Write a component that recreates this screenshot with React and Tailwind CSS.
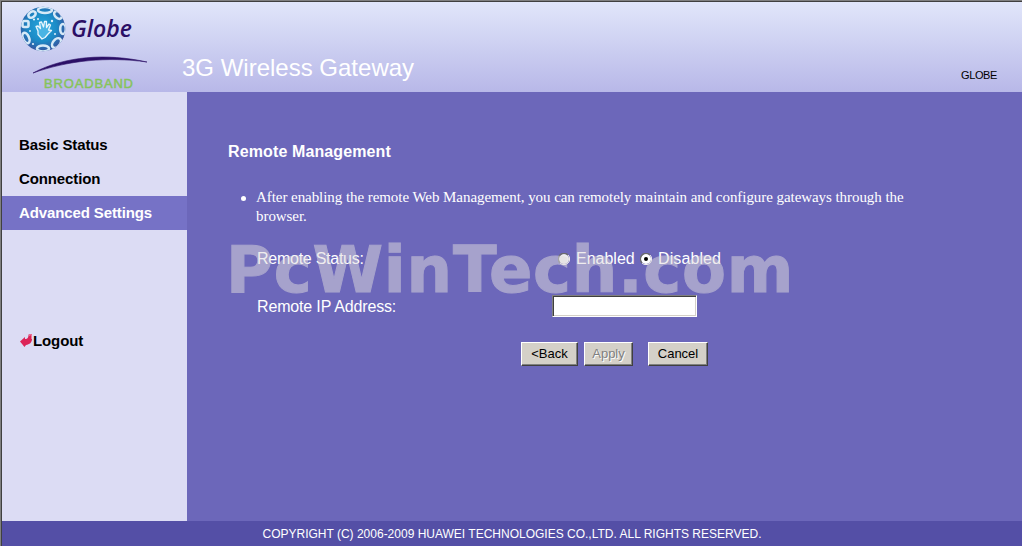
const menuItems = [
  { label: 'Basic Status', active: false },
  { label: 'Connection', active: false },
  { label: 'Advanced Settings', active: true },
]

function GlobeLogo() {
  return (
    <svg width="160" height="90" viewBox="0 0 160 90" className="block">
      <defs>
        <radialGradient id="ball" cx="0.48" cy="0.45" r="0.55">
          <stop offset="0" stopColor="#27a6dc" />
          <stop offset="0.6" stopColor="#1c8ac6" />
          <stop offset="1" stopColor="#35559f" />
        </radialGradient>
        <clipPath id="ballClip">
          <circle cx="41" cy="27" r="22.3" />
        </clipPath>
      </defs>
      <circle cx="41" cy="27" r="22.3" fill="url(#ball)" />
      {/* people holding hands around the ball */}
      <g clipPath="url(#ballClip)" fill="none" stroke="#d6e9f7" strokeWidth="2.6">
        <ellipse cx="43" cy="8" rx="7" ry="3" />
        <ellipse cx="30" cy="12.5" rx="4" ry="2.8" transform="rotate(-35 30 12.5)" />
        <ellipse cx="56" cy="13" rx="4.5" ry="3" transform="rotate(45 56 13)" />
        <rect x="20.5" y="19" width="6" height="6" rx="1.5" />
        <ellipse cx="61" cy="27" rx="2.8" ry="5" />
        <ellipse cx="24" cy="36" rx="3" ry="5.5" transform="rotate(-25 24 36)" />
        <ellipse cx="54.5" cy="41" rx="3.5" ry="5.5" transform="rotate(40 54.5 41)" />
        <ellipse cx="41" cy="46.5" rx="6" ry="3" />
      </g>
      <g fill="#e3f1fb">
        <circle cx="32" cy="17.5" r="1.1" />
        <circle cx="36" cy="17" r="1" />
        <circle cx="50" cy="19" r="1.2" />
        <circle cx="31" cy="42" r="1.1" />
        <circle cx="28" cy="29" r="0.9" />
        <circle cx="53" cy="32" r="1" />
      </g>
      <path
        d="M40 37L36 32.5V29L34 24.5L36 24L38.5 26.5L37.5 20.5L39.5 20L41.5 25L42.5 19.5H44.5V25.5L47 22L48.5 23L46.5 28L49.5 28.5L46 32L43 35.5Z"
        fill="#49b4e4"
        stroke="#eaf6fd"
        strokeWidth="1.3"
        strokeLinejoin="round"
      />
      <text
        x="69"
        y="35"
        textLength="61"
        lengthAdjust="spacingAndGlyphs"
        fill="#2b0f66"
        className="font-['Open_Sans',sans-serif] text-[23px] font-semibold italic"
      >
        Globe
      </text>
      <path d="M31 71C63 54 104 51 145 60C105 54.5 66 58.5 31 71Z" fill="#2b0f66" stroke="#2b0f66" strokeWidth="0.6" />
      <text
        x="42"
        y="85.5"
        textLength="89"
        fill="#86c35c"
        stroke="#86c35c"
        strokeWidth="0.5"
        className="font-['Liberation_Sans',Arial,sans-serif] text-[13px]"
      >
        BROADBAND
      </text>
    </svg>
  )
}

function LogoutIcon() {
  return (
    <svg width="13" height="14" viewBox="0 0 13 14" className="block shrink-0">
      <path d="M0 7.5L5 3V5C8 5 8.5 3 8.5 0.5L12 0V5C12 8.5 9.5 10.5 6 11L4.5 13Z" fill="#dc2458" />
      <path d="M9 1.5L11.5 0.5V5" fill="none" stroke="#ee7f9d" />
    </svg>
  )
}

function Radio({ checked }) {
  return (
    <svg width="12" height="12" viewBox="0 0 12 12" className="block shrink-0">
      <circle cx="6" cy="6" r="5" fill={checked ? '#fff' : '#ececec'} />
      <path d="M2 10A5.5 5.5 0 0 1 10 2" fill="none" stroke="#6b6b6b" strokeWidth="1.3" />
      <path d="M10 2A5.5 5.5 0 0 1 2 10" fill="none" stroke="#f4f2ec" strokeWidth="1" />
      {checked && <circle cx="6" cy="6" r="2" fill="#000" />}
    </svg>
  )
}

function WinButton({ children, className, disabled }) {
  return (
    <button
      disabled={disabled}
      className={`h-6 border border-t-white border-l-white border-r-[#404040] border-b-[#404040] bg-[#d4d0c8] text-center text-[13px] leading-[22px] shadow-[inset_-1px_-1px_0_#808080] ${
        disabled ? 'text-[#808080] [text-shadow:1px_1px_0_#fff]' : 'text-black'
      } ${className}`}
    >
      {children}
    </button>
  )
}

function App() {
  return (
    <div className="flex h-[546px] w-[1022px] flex-col overflow-hidden border-t border-l border-[#808080] font-['Liberation_Sans',Arial,sans-serif]">
      <div className="flex min-h-0 flex-1 flex-col border-t border-l border-[#404040]">
        <header className="flex h-[90px] shrink-0 bg-linear-to-b from-[#e1e6fa] to-[#b8b8e8]">
          <div className="w-[180px]">
            <GlobeLogo />
          </div>
          <h1 className="pt-[52px] text-[24px] leading-[28px] whitespace-nowrap text-white">3G Wireless Gateway</h1>
          <div className="ml-auto pt-[67px] pr-[25px] text-[11px] leading-[13px] tracking-[-0.4px] text-black">GLOBE</div>
        </header>

        <div className="flex min-h-0 flex-1">
          <aside className="w-[185px] shrink-0 bg-[#dcdcf4] pt-9 text-[15px] font-bold tracking-[-0.12px]">
            {menuItems.map((item) => (
              <div
                key={item.label}
                className={`h-[34px] pl-[17px] leading-[34px] whitespace-nowrap ${
                  item.active ? 'bg-[#7672c6] text-white' : 'text-black'
                }`}
              >
                {item.label}
              </div>
            ))}
            <div className="mt-[94px] flex h-[34px] items-center pl-[18px]">
              <LogoutIcon />
              <span>Logout</span>
            </div>
          </aside>

          <main className="relative flex-1 bg-[#6c67ba] text-white">
            <h2 className="pt-[51px] pl-[41px] text-[16px] leading-[18px] font-bold tracking-[0.12px]">Remote Management</h2>
            <div className="mt-[27px] flex pl-[54px] font-['Liberation_Serif','Times_New_Roman',serif] text-[15px] leading-[19px]">
              <span className="mt-[8px] mr-[10px] size-[5px] rounded-full bg-white" />
              <p className="tracking-[-0.06px] whitespace-nowrap">
                After enabling the remote Web Management, you can remotely maintain and configure gateways through the
                <br />
                browser.
              </p>
            </div>

            <div className="mt-[23px] flex h-[20px] items-center pl-[70px] text-[16px]">
              <span className="w-[301px] shrink-0 tracking-[-0.26px]">Remote Status:</span>
              <Radio />
              <span className="w-[70px] shrink-0 pl-[6px]">Enabled</span>
              <Radio checked />
              <span className="pl-[6px] tracking-[0.1px]">Disabled</span>
            </div>
            <div className="mt-[25px] flex h-[24px] items-center pl-[70px] text-[16px]">
              <span className="w-[295px] shrink-0 pt-[1px] tracking-[-0.16px]">Remote IP Address:</span>
              <input
                type="text"
                className="relative z-10 h-[22px] w-[145px] border border-t-[#808080] border-r-white border-b-white border-l-[#808080] bg-white shadow-[inset_1px_1px_0_#404040,inset_-1px_-1px_0_#d4d0c8]"
              />
            </div>
            <div className="mt-[24px] flex pl-[334px]">
              <WinButton className="w-[57px]">&lt;Back</WinButton>
              <WinButton className="ml-[6px] w-[49px]" disabled>
                Apply
              </WinButton>
              <WinButton className="ml-[15px] w-[60px]">Cancel</WinButton>
            </div>

            {/* translucent watermark over the form rows */}
            <div className="pointer-events-none absolute top-[140px] left-[39px] font-['DejaVu_Sans',sans-serif] text-[64px] leading-[76px] font-bold tracking-[0.8px] whitespace-nowrap text-[#e0ddde] opacity-50 [-webkit-text-stroke:1px_#e0ddde]">
              PcWinTech.com
            </div>
          </main>
        </div>

        <footer className="h-[25px] shrink-0 bg-[#544fa6] pt-[1px] text-center text-[12px] leading-[25px] text-white">
          COPYRIGHT (C) 2006-2009 HUAWEI TECHNOLOGIES CO.,LTD. ALL RIGHTS RESERVED.
        </footer>
      </div>
    </div>
  )
}

export default App
